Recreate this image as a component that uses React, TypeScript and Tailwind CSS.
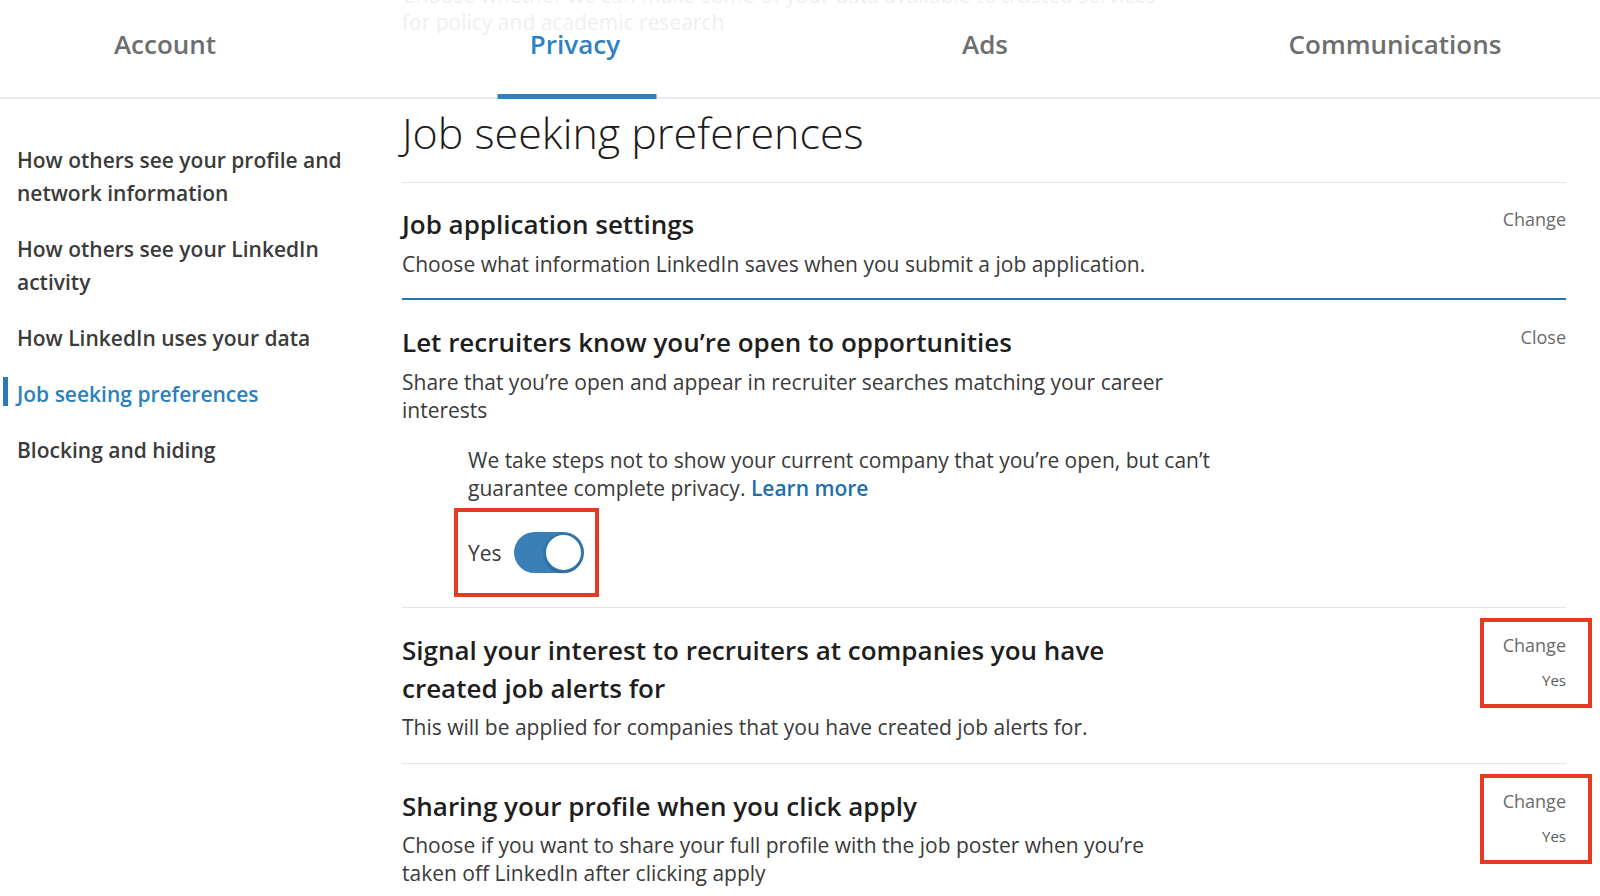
import React from "react";

const tabs = [
  { label: "Account", active: false },
  { label: "Privacy", active: true },
  { label: "Ads", active: false },
  { label: "Communications", active: false },
];

const sideItems = [
  { label: ["How others see your profile and", "network information"], active: false },
  { label: ["How others see your LinkedIn", "activity"], active: false },
  { label: ["How LinkedIn uses your data"], active: false },
  { label: ["Job seeking preferences"], active: true },
  { label: ["Blocking and hiding"], active: false },
];

function ChangeYes() {
  return (
    <div className="relative self-start flex flex-col items-end shrink-0">
      <span className="text-[18px] leading-[28px] text-[#6a6a6a]">Change</span>
      <span className="text-[15px] leading-[22px] mt-[10px] text-[#5a5a5a]">Yes</span>
      <div className="absolute -top-[13px] -bottom-[17px] -left-[23px] -right-[26px] border-4 border-[#e53b22]" />
    </div>
  );
}

export default function App() {
  return (
    <div className="w-[1600px] h-[896px] overflow-hidden bg-white font-['Open_Sans',sans-serif] text-[#333]">
      <header className="relative h-[99px] border-b-2 border-[#e8eaed]">
        <div className="absolute left-[402px] -top-[18px] text-[21px] leading-[27px] text-[#efefef] whitespace-nowrap">
          <div>Choose whether we can make some of your data available to trusted services</div>
          <div>for policy and academic research</div>
        </div>
        <nav className="relative flex h-full -ml-[40px]">
          {tabs.map((t) => (
            <div key={t.label} className="relative w-[413px] flex justify-center">
              <span
                className={
                  "mt-[26px] text-[26px] leading-[36px] font-semibold " +
                  (t.active ? "text-[#2e82c1]" : "text-[#6e6e6e]")
                }
              >
                {t.label}
              </span>
              {t.active && (
                <div className="absolute left-1/2 -translate-x-1/2 ml-[2px] -bottom-[2px] w-[159px] h-[5px] bg-[#2e82c1]" />
              )}
            </div>
          ))}
        </nav>
      </header>

      <div className="flex">
        <aside className="w-[402px] shrink-0 pt-[45px] flex flex-col gap-[23px]">
          {sideItems.map((it) => (
            <div key={it.label[0]} className="relative pl-[17px]">
              {it.active && (
                <div className="absolute left-[3px] top-[-1px] w-[5px] h-[29px] bg-[#2a7ab8]" />
              )}
              <div
                className={
                  "text-[21px] leading-[33px] font-semibold " +
                  (it.active ? "text-[#2a7fbd]" : "text-[#3b3b3b]")
                }
              >
                {it.label.map((l) => (
                  <div key={l}>{l}</div>
                ))}
              </div>
            </div>
          ))}
        </aside>

        <main className="w-[1164px] shrink-0">
          <h1 className="pt-[6px] pb-[21px] text-[43px] leading-[56px] font-light text-[#1c1c1c] border-b border-[#e3e6e9]">
            Job seeking preferences
          </h1>

          <section className="pt-[22px] pb-[20px] border-b-2 border-[#2377b5] flex justify-between">
            <div>
              <h2 className="text-[26px] leading-[38px] font-semibold text-[#1e1e1e]">Job application settings</h2>
              <p className="mt-[7px] text-[21px] leading-[28px] text-[#3a3a3a]">
                Choose what information LinkedIn saves when you submit a job application.
              </p>
            </div>
            <span className="text-[18px] leading-[28px] text-[#6a6a6a]">Change</span>
          </section>

          <section className="pt-[23px] pb-[10px] border-b border-[#e3e6e9]">
            <div className="flex justify-between">
              <div>
                <h2 className="text-[26px] leading-[38px] font-semibold text-[#1e1e1e]">
                  Let recruiters know you’re open to opportunities
                </h2>
                <p className="mt-[7px] text-[21px] leading-[28px] text-[#3a3a3a]">
                  Share that you’re open and appear in recruiter searches matching your career
                  <br />
                  interests
                </p>
              </div>
              <span className="text-[18px] leading-[28px] text-[#6a6a6a]">Close</span>
            </div>
            <p className="mt-[22px] ml-[66px] text-[21px] leading-[28px] text-[#3a3a3a]">
              We take steps not to show your current company that you’re open, but can’t
              <br />
              guarantee complete privacy.{" "}
              <a className="font-semibold text-[#1f6fae]">Learn more</a>
            </p>
            <div className="mt-[6px] ml-[52px] inline-flex items-center gap-[12px] border-4 border-[#e53b22] pl-[10px] pr-[11px] py-[20px]">
              <span className="text-[21px] leading-[28px] text-[#3a3a3a]">Yes</span>
              <div className="w-[70px] h-[41px] rounded-full bg-[#3a7fb6] flex items-center justify-end pr-[1px]">
                <div className="w-[39px] h-[39px] rounded-full bg-white border-2 border-[#2f77b0] shadow-[0_1px_2px_rgba(0,0,0,0.3)]" />
              </div>
            </div>
          </section>

          <section className="pt-[23px] pb-[22px] border-b border-[#e3e6e9] flex justify-between">
            <div>
              <h2 className="text-[26px] leading-[38px] font-semibold text-[#1e1e1e]">
                Signal your interest to recruiters at companies you have
                <br />
                created job alerts for
              </h2>
              <p className="mt-[6px] text-[21px] leading-[28px] text-[#3a3a3a]">
                This will be applied for companies that you have created job alerts for.
              </p>
            </div>
            <ChangeYes />
          </section>

          <section className="pt-[23px] flex justify-between">
            <div>
              <h2 className="text-[26px] leading-[38px] font-semibold text-[#1e1e1e]">
                Sharing your profile when you click apply
              </h2>
              <p className="mt-[6px] text-[21px] leading-[28px] text-[#3a3a3a]">
                Choose if you want to share your full profile with the job poster when you’re
                <br />
                taken off LinkedIn after clicking apply
              </p>
            </div>
            <ChangeYes />
          </section>
        </main>
      </div>
    </div>
  );
}
